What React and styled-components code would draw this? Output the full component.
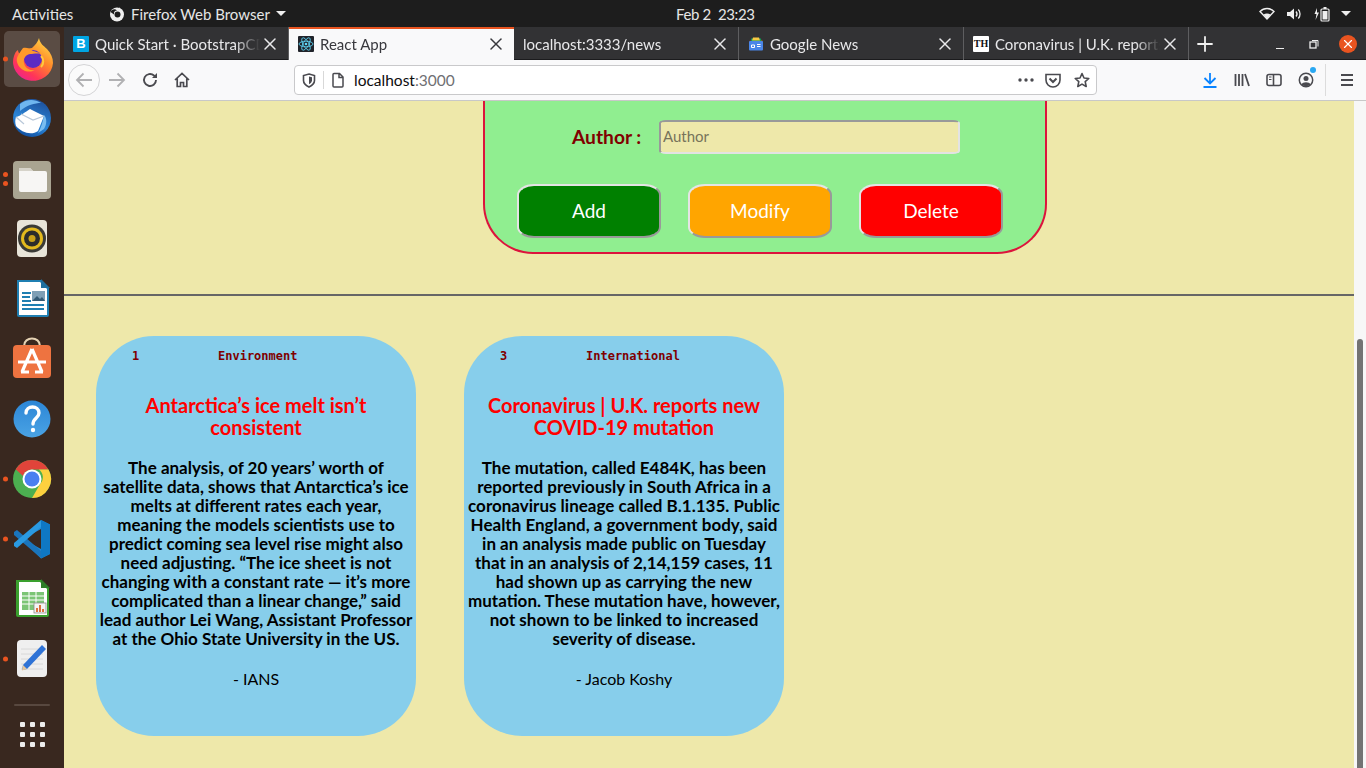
import React from "react";
import styled, { createGlobalStyle } from "styled-components";
import { X, Plus } from "lucide-react";

const uiFont = `"Lato", "Noto Sans", sans-serif`;

const GlobalStyle = createGlobalStyle`
  html, body { margin: 0; padding: 0; height: 100%; overflow: hidden; }
  body { font-family: ${uiFont}; }
  * { box-sizing: border-box; }
`;

const Screen = styled.div`
  width: 1366px;
  height: 768px;
  display: flex;
  flex-direction: column;
  overflow: hidden;
`;

const TopBar = styled.div`
  height: 27px;
  flex: none;
  background: #1d1d1d;
  color: #e6e6e6;
  font-size: 15px;
  display: flex;
  align-items: center;
`;

const Activities = styled.span`
  width: 109px;
  padding-left: 12px;
`;

const AppMenu = styled.div`
  width: 567px;
  display: flex;
  align-items: center;
  gap: 6px;
`;

const Clock = styled.span`
  width: 79px;
  white-space: pre;
  letter-spacing: -0.35px;
`;

const Tray = styled.div`
  margin-left: auto;
  display: flex;
  align-items: center;
  width: 107px;
  justify-content: space-between;
  padding-right: 15px;
`;

const Body = styled.div`
  flex: 1;
  display: flex;
  min-height: 0;
`;

const Dock = styled.div`
  width: 64px;
  flex: none;
  background: #39281f;
  padding-top: 2px;
  display: flex;
  flex-direction: column;
  align-items: center;
`;

const DockItem = styled.div`
  position: relative;
  width: 56px;
  height: 60px;
  display: flex;
  align-items: center;
  justify-content: center;
  &::before {
    content: "";
    display: ${(p) => (p.$active ? "block" : "none")};
    position: absolute;
    inset: 2px 0;
    background: rgba(255, 255, 255, 0.17);
    border-radius: 5px;
  }
  svg { position: relative; }
`;

const RunDots = styled.div`
  position: absolute;
  left: -1px;
  top: 50%;
  transform: translateY(-50%);
  display: flex;
  flex-direction: column;
  gap: 4px;
`;

const RunDot = styled.i`
  display: block;
  width: 5px;
  height: 5px;
  border-radius: 50%;
  background: #e95420;
`;

const DockRule = styled.div`
  width: 36px;
  height: 2px;
  margin-top: 15px;
  background: #58483f;
  border-radius: 1px;
`;

const AppGrid = styled.div`
  margin-top: 16px;
  display: grid;
  grid-template-columns: repeat(3, 5px);
  gap: 5px;
`;

const GridDot = styled.i`
  display: block;
  width: 5px;
  height: 5px;
  border-radius: 1px;
  background: #ececec;
`;

const Browser = styled.div`
  flex: 1;
  min-width: 0;
  display: flex;
  flex-direction: column;
`;

const TabBar = styled.div`
  height: 33px;
  flex: none;
  background: #323234;
  display: flex;
  align-items: stretch;
`;

const Tab = styled.div`
  width: 225px;
  flex: none;
  display: flex;
  align-items: center;
  padding: 0 8px 0 9px;
  font-size: 15px;
  background: ${(p) => (p.$active ? "#f9f9fa" : "transparent")};
  color: ${(p) => (p.$active ? "#38383d" : "#e8e8ea")};
  border-right: ${(p) => (p.$active ? "none" : "1px solid #5e5e60")};
  box-shadow: ${(p) => (p.$active ? "inset 0 2px 0 #e95420" : "inset 0 -1px 0 #1b1b1d")};
`;

const TabTitle = styled.span`
  flex: 1;
  min-width: 0;
  margin-left: ${(p) => (p.$bare ? 0 : 6)}px;
  white-space: nowrap;
  overflow: hidden;
  mask-image: linear-gradient(to right, #000 85%, transparent 100%);
`;

const TabClose = styled(X)`
  flex: none;
  width: 20px;
  height: 20px;
`;

const Favicon = styled.span`
  width: 16px;
  height: 16px;
  flex: none;
  display: flex;
  align-items: center;
  justify-content: center;
  background: ${(p) => p.$bg || "transparent"};
  color: ${(p) => p.$fg || "#fff"};
  font: ${(p) => p.$font || "700 13px 'Liberation Sans', sans-serif"};
  border-radius: 1px;
`;

const TabRest = styled.div`
  flex: 1;
  display: flex;
  align-items: center;
  color: #f0f0f0;
  box-shadow: inset 0 -1px 0 #1b1b1d;
  padding: 0 1px 0 4px;
`;

const WinControls = styled.div`
  margin-left: auto;
  display: flex;
  align-items: center;
`;

const WinSlot = styled.span`
  width: 34px;
  display: flex;
  align-items: center;
  justify-content: center;
`;

const WinClose = styled.span`
  width: 18px;
  height: 18px;
  border-radius: 50%;
  background: #e95420;
  color: #fff;
  display: flex;
  align-items: center;
  justify-content: center;
`;

const Toolbar = styled.div`
  height: 41px;
  flex: none;
  background: #f9f9fa;
  border-bottom: 1px solid #c8c8c8;
  display: flex;
  align-items: center;
  padding-left: 4px;
  padding-bottom: 1px;
  color: #4a4a4f;
`;

const ToolBtn = styled.span`
  width: ${(p) => p.$w || 32}px;
  height: 32px;
  flex: none;
  display: flex;
  align-items: center;
  justify-content: center;
  border-radius: 50%;
  border: ${(p) => (p.$round ? "1px solid #d4d4d6" : "none")};
  background: ${(p) => (p.$round ? "#fbfbfb" : "transparent")};
  position: relative;
  margin-left: ${(p) => p.$ml || 0};
`;

const UrlBar = styled.div`
  width: 803px;
  height: 30px;
  margin-left: 96px;
  flex: none;
  background: #fff;
  border: 1px solid #c9c9cb;
  border-radius: 4px;
  display: flex;
  align-items: center;
  font-size: 15.5px;
`;

const UrlDivider = styled.span`
  width: 1px;
  height: 18px;
  background: #d8d8d8;
  margin-right: 6px;
`;

const UrlHost = styled.span`
  color: #0c0c0d;
  margin-left: 8px;
`;

const UrlPort = styled.span`
  color: #6f6f73;
`;

const ToolSep = styled.span`
  width: 1px;
  height: 32px;
  background: #dcdcdc;
  margin: 0 5px 0 3px;
`;

const NotifyDot = styled.i`
  position: absolute;
  top: 3px;
  right: 6px;
  width: 6px;
  height: 6px;
  border-radius: 50%;
  background: #2aa8f2;
`;

const Viewport = styled.div`
  flex: 1;
  min-height: 0;
  display: flex;
`;

const Page = styled.div`
  flex: 1;
  min-width: 0;
  background: palegoldenrod;
  overflow: hidden;
`;

const Scrollbar = styled.div`
  width: 12px;
  flex: none;
  background: #f7f7f7;
  padding: 238px 3px 0;
`;

const ScrollThumb = styled.div`
  height: 100%;
  background: #737373;
  border-radius: 3px 3px 0 0;
`;

const FormPanel = styled.div`
  width: 564px;
  margin: 0 0 0 419px;
  height: 153px;
  background: lightgreen;
  border: 2px solid crimson;
  border-top: none;
  border-radius: 0 0 50px 50px;
  padding: 19px 0 0 32px;
`;

const FieldRow = styled.div`
  display: flex;
  align-items: center;
  margin-left: 55px;
`;

const FieldLabel = styled.label`
  width: 87px;
  color: maroon;
  font-size: 19.2px;
  font-weight: 700;
  padding-bottom: 2px;
`;

const FieldInput = styled.input`
  width: 301px;
  height: 34px;
  background: palegoldenrod;
  border: 2px solid;
  border-color: #999 #e3e3e3 #e3e3e3 #999;
  border-radius: 7px / 3px;
  padding: 0 2px 2px;
  font: 400 15px ${uiFont};
  color: #333;
  &::placeholder { color: #77735a; opacity: 1; }
`;

const ButtonRow = styled.div`
  display: flex;
  gap: 27px;
  margin-top: 30px;
`;

const ActionButton = styled.button`
  width: 144px;
  height: 54px;
  background: ${(p) => p.$color};
  border: 2px solid;
  border-color: #e4e4e4 #999 #999 #e4e4e4;
  border-radius: 17px / 11px;
  color: #fff;
  padding: 0 0 2px;
  font: 400 19px ${uiFont};
`;

const Rule = styled.hr`
  margin: 40px 0 0;
  height: 2px;
  border: none;
  background: #666;
`;

const Cards = styled.div`
  display: flex;
  gap: 48px;
  padding: 40px 0 0 32px;
`;

const Card = styled.article`
  width: 320px;
  height: 400px;
  background: skyblue;
  border-radius: 58px;
  text-align: center;
  padding-top: 13px;
`;

const CardMeta = styled.div`
  display: flex;
  padding-left: 36px;
  color: maroon;
  font: 700 12px "DejaVu Sans Mono", monospace;
  line-height: 14px;
`;

const CardId = styled.span`
  width: 86px;
  text-align: left;
`;

const CardTitle = styled.h2`
  margin: 31px 0 0;
  color: red;
  font-size: 20px;
  line-height: 22px;
  font-weight: 700;
`;

const CardText = styled.p`
  margin: 20px 0 0;
  color: #000;
  font-size: 17px;
  line-height: 19px;
  font-weight: 700;
  white-space: nowrap;
`;

const CardAuthor = styled.p`
  margin: 21px 0 0;
  color: #000;
  font-size: 16px;
  line-height: 19px;
`;

// dock icons are 48 box drawings
const Ic = ({ children, size = 48, vb = 48, ...rest }) => (
  <svg width={size} height={size} viewBox={`0 0 ${vb} ${vb}`} fill="none" {...rest}>
    {children}
  </svg>
);

const FirefoxDock = () => (
  <Ic>
    <defs>
      <linearGradient id="ffa" x1="0.85" y1="0" x2="0.15" y2="1">
        <stop offset="0" stopColor="#ffe14a" />
        <stop offset="0.4" stopColor="#ff8a2a" />
        <stop offset="0.75" stopColor="#ff3558" />
        <stop offset="1" stopColor="#e8209a" />
      </linearGradient>
    </defs>
    <path d="M31 3c1 6 5 8 8 11 4 4 6 9 6 14a20 19 0 1 1-39-7c1-3 2-5 4-6 0 2 1 3 2 4 3-4 7-6 12-6 3-3 6-6 7-10z" fill="url(#ffa)" />
    <circle cx="25" cy="24" r="9" fill="#5c2bc4" />
    <path d="M15 13c4-1 7 1 10 3 3 1 6 1 8 3-4-1-8 0-11 0-5 1-7 5-6 9 1 5 6 8 11 7-7 4-16 0-18-8-1-5 2-8 6-14z" fill="#ff9a2b" />
    <path d="M33 21c3 3 3 8 0 11" stroke="#ffcb3d" strokeWidth="2" />
  </Ic>
);

const ThunderbirdDock = () => (
  <Ic>
    <defs>
      <linearGradient id="tb" x1="0.7" y1="0" x2="0.3" y2="1">
        <stop offset="0" stopColor="#1d4f9a" />
        <stop offset="0.6" stopColor="#2b86d8" />
        <stop offset="1" stopColor="#0f4d9e" />
      </linearGradient>
    </defs>
    <circle cx="24" cy="23" r="19" fill="url(#tb)" />
    <path d="M8 22c5-1 9-5 14-8l14 7-6 15c-7 5-17 1-22-5-1-3-1-6 0-9z" fill="#fff" />
    <path d="M13 19l12 6 11-4M8 22l8 7" stroke="#b9c8d9" strokeWidth="1.2" />
    <path d="M12 9c6-5 15-5 21-1-6 0-14 2-21 8z" fill="#6fb6ef" />
    <path d="M36 20c3 3 3 9 0 14l-6 4c3-5 5-11 6-18z" fill="#79bdf0" />
  </Ic>
);

const FilesDock = () => (
  <Ic>
    <rect x="5" y="6" width="38" height="38" rx="4" fill="#a9a491" />
    <path d="M11 15a2 2 0 0 1 2-2h9l3 3h12a2 2 0 0 1 2 2v17a2 2 0 0 1-2 2H13a2 2 0 0 1-2-2z" fill="#f7f6f4" />
    <path d="M11 13h11l3 3H11z" fill="#d6d3c9" />
  </Ic>
);

const RhythmboxDock = () => (
  <Ic>
    <rect x="9" y="5" width="30" height="37" rx="4" fill="#e8e4d9" />
    <circle cx="24" cy="23.5" r="14" fill="#3a3a36" />
    <circle cx="24" cy="23.5" r="11" fill="#e3b91d" />
    <circle cx="24" cy="23.5" r="8" fill="#2c2c2a" />
    <circle cx="24" cy="23.5" r="3.5" fill="#c9a118" />
  </Ic>
);

const WriterDock = () => (
  <Ic>
    <path d="M9 5h24l8 8v27a2 2 0 0 1-2 2H11a2 2 0 0 1-2-2z" fill="#1f7fb2" />
    <path d="M11 7h21l7 7v26H11z" fill="#fff" />
    <path d="M33 4l9 9h-9z" fill="#1f6f9e" />
    <path d="M14 18h9M14 22h8M14 26h9M14 30h22M14 34h22" stroke="#1f7fb2" strokeWidth="2" />
    <rect x="24" y="16" width="13" height="10" fill="#7f9fb5" />
    <path d="M24 26l5-5 3 3 2-2 3 4z" fill="#345a75" />
  </Ic>
);

const SoftwareDock = () => (
  <Ic>
    <path d="M16 11c0-10 16-10 16 0" stroke="#e6d3b4" strokeWidth="2" />
    <rect x="5" y="10" width="38" height="33" rx="4" fill="#ee7340" />
    <path d="M24 14L14 37M24 14l10 23M10 27h28M13 37h8M27 37h8" stroke="#fff" strokeWidth="3.2" />
  </Ic>
);

const HelpDock = () => (
  <Ic>
    <defs>
      <linearGradient id="hp" x1="0" y1="0" x2="0" y2="1">
        <stop offset="0" stopColor="#2c86d6" />
        <stop offset="1" stopColor="#4aa3e4" />
      </linearGradient>
    </defs>
    <circle cx="24" cy="24" r="18.5" fill="url(#hp)" />
    <path d="M18 18c0-8 13-8 13 0 0 5-6 5-6 11" stroke="#fff" strokeWidth="3.4" strokeLinecap="round" />
    <circle cx="25" cy="35" r="2.2" fill="#fff" />
  </Ic>
);

const ChromeDock = () => (
  <Ic>
    <circle cx="24" cy="24" r="19" fill="#4caf50" />
    <path d="M24 5a19 19 0 0 1 16.5 9.5H24a9.5 9.5 0 0 0-9 6.5L7.7 14.3A19 19 0 0 1 24 5z" fill="#e0443a" />
    <path d="M40.5 14.5A19 19 0 0 1 24 43l8.3-14.2A9.5 9.5 0 0 0 30.8 14.5z" fill="#fdd03e" />
    <circle cx="24" cy="24" r="9.5" fill="#fff" />
    <circle cx="24" cy="24" r="7.5" fill="#4a7ff0" />
  </Ic>
);

const VSCodeDock = () => (
  <Ic>
    <path d="M33 5l9 4.500v29.500l-9 4.500-19-18.500 19-19.500z" fill="#1f8ad6" />
    <path d="M33 5l9 4.500v29.500l-9 4.500z" fill="#0f78c4" />
    <path d="M33 14v20L15 24z" fill="#39281f" />
    <path d="M6 17l3-2 24 21v7L6 20z" fill="#1a75bc" />
    <path d="M6 31l3 2 24-21V5L6 28z" fill="#2a9ae2" />
  </Ic>
);

const CalcDock = () => (
  <Ic>
    <path d="M8 5h25l8 8v27a2 2 0 0 1-2 2H10a2 2 0 0 1-2-2z" fill="#3aa02e" />
    <path d="M11 7h21l7 7v26H11z" fill="#fff" />
    <path d="M33 4l9 9h-9z" fill="#2f7d28" />
    <rect x="14" y="17" width="22" height="18" fill="#7cc576" />
    <path d="M14 21h22M14 25h22M14 29h22M21 17v18M28 17v18" stroke="#fff" strokeWidth="1" />
    <rect x="26" y="28" width="12" height="10" fill="#f4f4f4" stroke="#8c8c8c" strokeWidth=".8" />
    <path d="M29 37v-4M32 37v-7M35 37v-3" stroke="#d9622b" strokeWidth="1.8" />
  </Ic>
);

const EditorDock = () => (
  <Ic>
    <rect x="9" y="5" width="30" height="37" rx="4" fill="#efefef" />
    <path d="M13 14h22M13 19h22M13 24h22M13 29h22M13 34h22" stroke="#d8d8d8" strokeWidth="1" />
    <path d="M34 10l4 4-19 20-5 1 1-5z" fill="#2f73d6" />
    <path d="M15 30l4 4-5 1.500z" fill="#e7c79a" />
  </Ic>
);

const Wifi = () => (
  <Ic size={16} vb={16}>
    <path d="M1 5.500C5 1.500 11 1.500 15 5.500L8 13z" stroke="#eee" strokeWidth="1.400" fill="none" />
    <path d="M4.500 8.500c2-1.500 5-1.500 7 0L8 13z" fill="#eee" />
  </Ic>
);

const Speaker = () => (
  <Ic size={16} vb={16}>
    <path d="M1 6h3l4-3.500v11L4 10H1z" fill="#eee" />
    <path d="M10 5.500c1.300 1.500 1.300 3.500 0 5M12.300 3.500c2.300 2.500 2.300 6.500 0 9" stroke="#eee" strokeWidth="1.300" />
  </Ic>
);

const Battery = () => (
  <Ic size={16} vb={16}>
    <path d="M3 2L0.500 8h2L1.500 14 5 6.500H3z" fill="#eee" />
    <rect x="7" y="3" width="8" height="12" rx="1" stroke="#eee" strokeWidth="1.200" />
    <rect x="8.500" y="5" width="5" height="8.500" fill="#eee" />
    <rect x="9.500" y="1" width="3" height="2" fill="#eee" />
  </Ic>
);

const Caret = () => (
  <svg width="10" height="5" viewBox="0 0 10 5">
    <path d="M0 0h10L5 5z" fill="#eee" />
  </svg>
);

const FirefoxMono = () => (
  <Ic size={16} vb={16}>
    <circle cx="8" cy="8.500" r="7" fill="#eee" />
    <circle cx="8.500" cy="8.500" r="3" fill="#1d1d1d" />
    <path d="M1.500 6C3 3 6 2.500 8 4.500 6 4.500 4.500 6 5 8.500z" fill="#1d1d1d" />
    <path d="M10 0.500c0 2 2.500 2.500 4 5L10 4z" fill="#eee" />
  </Ic>
);

const ReactFavicon = () => (
  <Favicon $bg="#20232a">
    <svg width="16" height="16" viewBox="0 0 16 16" fill="none" stroke="#61dafb" strokeWidth=".8">
      <ellipse cx="8" cy="8" rx="7" ry="2.800" />
      <ellipse cx="8" cy="8" rx="7" ry="2.800" transform="rotate(60 8 8)" />
      <ellipse cx="8" cy="8" rx="7" ry="2.800" transform="rotate(120 8 8)" />
      <circle cx="8" cy="8" r="1.300" fill="#61dafb" stroke="none" />
    </svg>
  </Favicon>
);

const NewsFavicon = () => (
  <Favicon>
    <svg width="16" height="16" viewBox="0 0 16 16">
      <path d="M3 2.500h10v3H3z" fill="#0c9d58" />
      <path d="M2 3.500l3 9H1z" fill="#d93b2b" />
      <path d="M14 3.500l-3 9h4z" fill="#f2b90f" />
      <path d="M5 1.500h6l1 3H4z" fill="#f7c843" />
      <rect x="1" y="5" width="14" height="9.500" rx="1" fill="#4a86e8" />
      <path d="M3.500 9h3v2.500h-3zM9 8.500h3.500M9 10.500h3.500" stroke="#fff" fill="none" />
    </svg>
  </Favicon>
);

const Back = () => (
  <svg width="18" height="16" viewBox="0 0 18 16" fill="none" stroke="#b1b1b3" strokeWidth="1.800">
    <path d="M17 8H2M8.500 1.500L2 8l6.500 6.500" />
  </svg>
);

const Forward = () => (
  <svg width="18" height="16" viewBox="0 0 18 16" fill="none" stroke="#b1b1b3" strokeWidth="1.800">
    <path d="M1 8h15M9.500 1.500L16 8l-6.500 6.500" />
  </svg>
);

const Reload = () => (
  <Ic size={16} vb={16} stroke="#4a4a4f" strokeWidth="1.900">
    <path d="M14 8a6 6 0 1 1-2-4.500L14 5" />
    <path d="M15 1v5h-5z" fill="#4a4a4f" stroke="none" />
  </Ic>
);

const Home = () => (
  <Ic size={16} vb={16} stroke="#4a4a4f" strokeWidth="1.700">
    <path d="M1 8l7-6.500L15 8M3.200 6.500V14.500h3.300v-4h3v4h3.300V6.500" />
  </Ic>
);

const Shield = () => (
  <Ic size={16} vb={16} stroke="#4a4a4f" strokeWidth="1.600">
    <path d="M8 2l5.500 1.500v5C13.500 12 10 14 8 15c-2-1-5.500-3-5.500-6.500v-5z" />
    <path d="M8 4.500l3 .8v3c0 2-1.500 3-3 4z" fill="#4a4a4f" stroke="none" />
  </Ic>
);

const PageIcon = () => (
  <Ic size={16} vb={16} stroke="#4a4a4f" strokeWidth="1.500">
    <path d="M3 2.500a1 1 0 0 1 1-1h5.500L13 5v9a1 1 0 0 1-1 1H4a1 1 0 0 1-1-1zM9 1.500V5.500h4" />
  </Ic>
);

const Dots = () => (
  <svg width="16" height="4" viewBox="0 0 16 4" fill="#4a4a4f">
    <circle cx="2" cy="2" r="1.700" />
    <circle cx="8" cy="2" r="1.700" />
    <circle cx="14" cy="2" r="1.700" />
  </svg>
);

const Pocket = () => (
  <Ic size={16} vb={16} stroke="#4a4a4f" strokeWidth="1.600">
    <path d="M1 2.500h14v5.500a7 7 0 0 1-14 0z" />
    <path d="M4.500 6.500L8 10l3.500-3.500" strokeWidth="2" />
  </Ic>
);

const Star = () => (
  <Ic size={16} vb={16} stroke="#4a4a4f" strokeWidth="1.600" strokeLinejoin="round">
    <path d="M8 1.500l2 4.500 4.800.5-3.600 3.200 1 4.800L8 12.100l-4.200 2.400 1-4.800L1.200 6.500 6 6z" />
  </Ic>
);

const Download = () => (
  <Ic size={16} vb={16} stroke="#0a84ff" strokeWidth="1.800">
    <path d="M8 1v10M2.500 6L8 11.500 13.500 6M1.500 15h13" />
  </Ic>
);

const Library = () => (
  <Ic size={16} vb={16} stroke="#4a4a4f" strokeWidth="1.800">
    <path d="M1.500 2v12M5 2v12M8.500 2v12M11 2l4 12" />
  </Ic>
);

const SidebarIcon = () => (
  <Ic size={16} vb={16} stroke="#4a4a4f" strokeWidth="1.600">
    <rect x="1" y="2.500" width="14" height="11" rx="2" />
    <path d="M7.500 2.500v11" />
    <path d="M3 5h2.500M3 7.500h2.500" strokeWidth="1.200" />
  </Ic>
);

const Account = () => (
  <Ic size={16} vb={16} stroke="#4a4a4f" strokeWidth="1.500">
    <circle cx="8" cy="8" r="6.700" />
    <circle cx="8" cy="6.500" r="2.500" fill="#4a4a4f" stroke="none" />
    <path d="M3.500 12.500c1-3 8-3 9 0-2 2-7 2-9 0z" fill="#4a4a4f" stroke="none" />
  </Ic>
);

const Menu = () => (
  <Ic size={16} vb={16} stroke="#4a4a4f" strokeWidth="1.800">
    <path d="M2 3h12M2 8h12M2 13h12" />
  </Ic>
);

const dockApps = [
  { Icon: FirefoxDock, dots: 1, active: true },
  { Icon: ThunderbirdDock },
  { Icon: FilesDock, dots: 2 },
  { Icon: RhythmboxDock },
  { Icon: WriterDock },
  { Icon: SoftwareDock },
  { Icon: HelpDock },
  { Icon: ChromeDock, dots: 1 },
  { Icon: VSCodeDock, dots: 1 },
  { Icon: CalcDock },
  { Icon: EditorDock, dots: 1 },
];

const tabs = [
  { title: "Quick Start · BootstrapCDN", icon: <Favicon $bg="#00a5e3">B</Favicon> },
  { title: "React App", icon: <ReactFavicon />, active: true },
  { title: "localhost:3333/news" },
  { title: "Google News", icon: <NewsFavicon /> },
  {
    title: "Coronavirus | U.K. reports new COVID-19 mutation",
    icon: (
      <Favicon $bg="#fff" $fg="#111" $font="700 10px 'Liberation Serif', serif">
        TH
      </Favicon>
    ),
  },
];

const news = [
  {
    id: 1,
    category: "Environment",
    title: ["Antarctica’s ice melt isn’t", "consistent"],
    text: [
      "The analysis, of 20 years’ worth of",
      "satellite data, shows that Antarctica’s ice",
      "melts at different rates each year,",
      "meaning the models scientists use to",
      "predict coming sea level rise might also",
      "need adjusting. “The ice sheet is not",
      "changing with a constant rate — it’s more",
      "complicated than a linear change,” said",
      "lead author Lei Wang, Assistant Professor",
      "at the Ohio State University in the US.",
    ],
    author: "- IANS",
  },
  {
    id: 3,
    category: "International",
    title: ["Coronavirus | U.K. reports new", "COVID-19 mutation"],
    text: [
      "The mutation, called E484K, has been",
      "reported previously in South Africa in a",
      "coronavirus lineage called B.1.135. Public",
      "Health England, a government body, said",
      "in an analysis made public on Tuesday",
      "that in an analysis of 2,14,159 cases, 11",
      "had shown up as carrying the new",
      "mutation. These mutation have, however,",
      "not shown to be linked to increased",
      "severity of disease.",
    ],
    author: "- Jacob Koshy",
  },
];

const Lines = ({ items }) =>
  items.map((line, i) => (
    <React.Fragment key={i}>
      {line}
      {i < items.length - 1 && <br />}
    </React.Fragment>
  ));

export default function App() {
  return (
    <Screen>
      <GlobalStyle />
      <TopBar>
        <Activities>Activities</Activities>
        <AppMenu>
          <FirefoxMono />
          <span>Firefox Web Browser</span>
          <Caret />
        </AppMenu>
        <Clock>Feb 2  23:23</Clock>
        <Tray>
          <Wifi />
          <Speaker />
          <Battery />
          <Caret />
        </Tray>
      </TopBar>
      <Body>
        <Dock>
          {dockApps.map(({ Icon, dots, active }, i) => (
            <DockItem key={i} $active={active}>
              {dots && (
                <RunDots>
                  {Array.from({ length: dots }, (_, d) => (
                    <RunDot key={d} />
                  ))}
                </RunDots>
              )}
              <Icon />
            </DockItem>
          ))}
          <DockRule />
          <AppGrid>
            {Array.from({ length: 9 }, (_, i) => (
              <GridDot key={i} />
            ))}
          </AppGrid>
        </Dock>
        <Browser>
          <TabBar>
            {tabs.map((t) => (
              <Tab key={t.title} $active={t.active}>
                {t.icon}
                <TabTitle $bare={!t.icon}>{t.title}</TabTitle>
                <TabClose strokeWidth={1.8} />
              </Tab>
            ))}
            <TabRest>
              <Plus size={24} strokeWidth={1.8} />
              <WinControls>
                <WinSlot>
                  <svg width="10" height="10" viewBox="0 0 10 10" stroke="#eee">
                    <path d="M1 9.500h8" />
                  </svg>
                </WinSlot>
                <WinSlot>
                  <svg width="10" height="10" viewBox="0 0 10 10" stroke="#eee" fill="none">
                    <rect x="1" y="3" width="6" height="6" strokeWidth="1.300" />
                    <path d="M3 1.500h6v6" />
                  </svg>
                </WinSlot>
                <WinSlot>
                  <WinClose>
                    <X size={14} strokeWidth={2} />
                  </WinClose>
                </WinSlot>
              </WinControls>
            </TabRest>
          </TabBar>
          <Toolbar>
            <ToolBtn $round><Back /></ToolBtn>
            <ToolBtn $w={34}><Forward /></ToolBtn>
            <ToolBtn><Reload /></ToolBtn>
            <ToolBtn><Home /></ToolBtn>
            <UrlBar>
              <ToolBtn $w={28}><Shield /></ToolBtn>
              <UrlDivider />
              <PageIcon />
              <UrlHost>
                localhost<UrlPort>:3000</UrlPort>
              </UrlHost>
              <ToolBtn $w={24} $ml="auto"><Dots /></ToolBtn>
              <ToolBtn $w={30}><Pocket /></ToolBtn>
              <ToolBtn $w={28}><Star /></ToolBtn>
            </UrlBar>
            <ToolBtn $w={32} $ml="97px"><Download /></ToolBtn>
            <ToolBtn $w={32}><Library /></ToolBtn>
            <ToolBtn $w={32}><SidebarIcon /></ToolBtn>
            <ToolBtn $w={32}><Account /><NotifyDot /></ToolBtn>
            <ToolSep />
            <ToolBtn $w={32}><Menu /></ToolBtn>
          </Toolbar>
          <Viewport>
            <Page>
              <FormPanel>
                <FieldRow>
                  <FieldLabel>Author :</FieldLabel>
                  <FieldInput placeholder="Author" />
                </FieldRow>
                <ButtonRow>
                  <ActionButton $color="green">Add</ActionButton>
                  <ActionButton $color="orange">Modify</ActionButton>
                  <ActionButton $color="red">Delete</ActionButton>
                </ButtonRow>
              </FormPanel>
              <Rule />
              <Cards>
                {news.map((n) => (
                  <Card key={n.id}>
                    <CardMeta>
                      <CardId>{n.id}</CardId>
                      <span>{n.category}</span>
                    </CardMeta>
                    <CardTitle><Lines items={n.title} /></CardTitle>
                    <CardText><Lines items={n.text} /></CardText>
                    <CardAuthor>{n.author}</CardAuthor>
                  </Card>
                ))}
              </Cards>
            </Page>
            <Scrollbar>
              <ScrollThumb />
            </Scrollbar>
          </Viewport>
        </Browser>
      </Body>
    </Screen>
  );
}
